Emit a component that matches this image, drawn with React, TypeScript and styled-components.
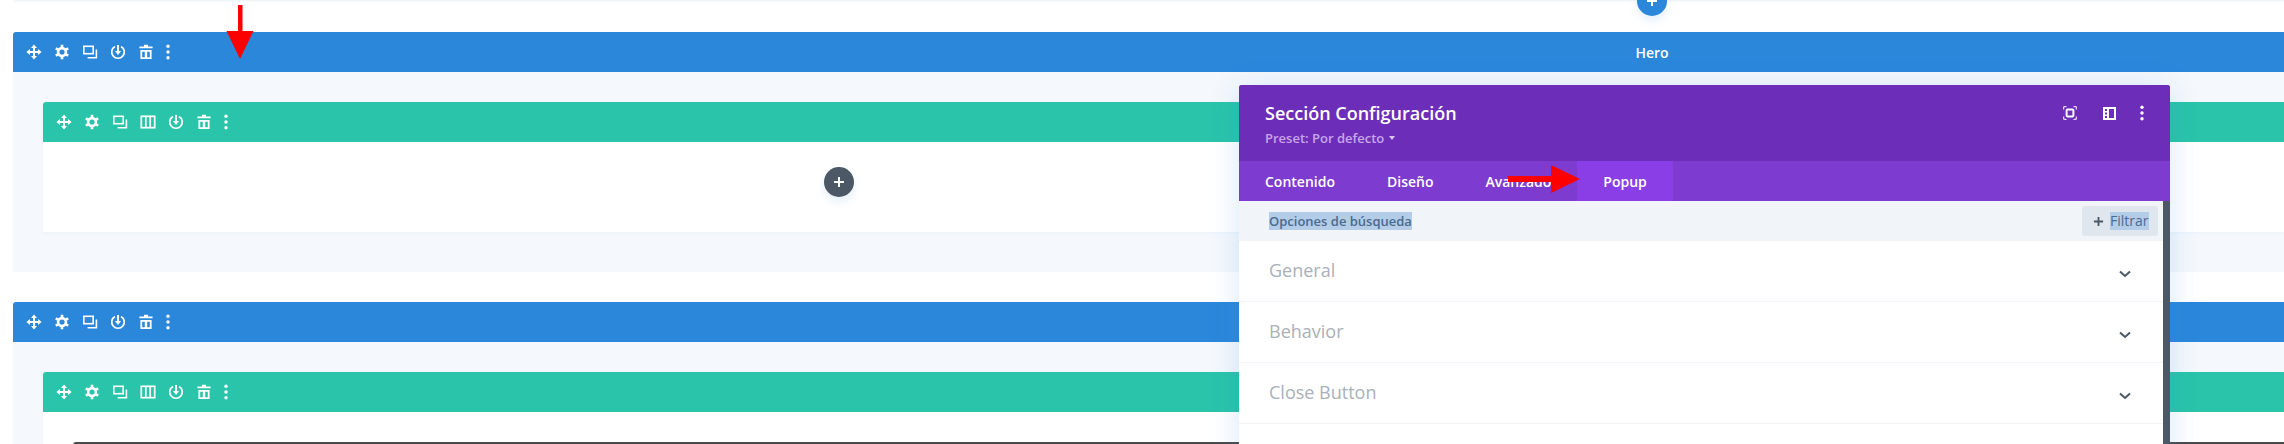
import React from "react";
import styled, { createGlobalStyle } from "styled-components";

const GlobalStyle = createGlobalStyle`
  html, body {
    margin: 0;
    padding: 0;
    background: #fff;
    font-family: "Open Sans", "Noto Sans", sans-serif;
  }
`;

const tabs = ["Contenido", "Diseño", "Avanzado", "Popup"];
const groups = ["General", "Behavior", "Close Button"];

const MoveIcon = () => (
  <svg width="16" height="16" viewBox="0 0 16 16" fill="#fff">
    <path d="M7 4h2v3h3V5l3.6 3L12 11V9H9v3h2l-3 3.6L5 12h2V9H4v2L.4 8 4 5v2h3V4H5l3-3.6L11 4z" />
  </svg>
);

const GearIcon = () => (
  <svg width="16" height="16" viewBox="0 0 16 16" fill="none" stroke="#fff">
    <circle cx="8" cy="8" r="3.9" strokeWidth="2.6" />
    <g strokeWidth="2.6">
      <path d="M8 .8v2.6M8 12.6v2.6" />
      <path d="M1.8 4.4l2.2 1.3M12 10.3l2.2 1.3" />
      <path d="M1.800 11.6L4 10.3M12 5.7l2.2-1.3" />
    </g>
  </svg>
);

const CloneIcon = () => (
  <svg width="16" height="16" viewBox="0 0 16 16" fill="none" stroke="#fff" strokeWidth="1.6">
    <rect x="1.8" y="2.3" width="9.4" height="7.4" />
    <path d="M14.4 5.5v8.2H5.6" />
  </svg>
);

const ColumnsIcon = () => (
  <svg width="16" height="16" viewBox="0 0 16 16" fill="none" stroke="#fff" strokeWidth="1.7">
    <rect x="1.3" y="2.3" width="13.4" height="11.4" />
    <path d="M5.8 2.3v11.4M10.2 2.3v11.4" />
  </svg>
);

const PowerIcon = () => (
  <svg width="16" height="16" viewBox="0 0 16 16" fill="none" stroke="#fff" strokeWidth="1.7">
    <path d="M5 2.4a6.3 6.3 0 1 0 6 0" />
    <path d="M8 1v6.5" strokeWidth="2" />
    <path d="M4.9 7h6.2L8 10.9z" fill="#fff" stroke="none" />
  </svg>
);

const TrashIcon = () => (
  <svg width="16" height="16" viewBox="0 0 16 16" fill="#fff">
    <path d="M6 .8h4v1.6h4.6v1.8H1.4V2.4H6z" />
    <path d="M2.4 6h11.2v9H2.4zM4.2 7.8v5.4h2.6V7.8zm5 0v5.4h2.6V7.8z" fillRule="evenodd" />
  </svg>
);

const DotsIcon = () => (
  <svg width="6" height="16" viewBox="0 0 6 16" fill="#fff">
    <circle cx="3" cy="2.2" r="1.7" />
    <circle cx="3" cy="8" r="1.7" />
    <circle cx="3" cy="13.8" r="1.7" />
  </svg>
);

const FocusIcon = () => (
  <svg width="14" height="14" viewBox="0 0 14 14" fill="none" stroke="#fff" strokeWidth="1">
    <path d="M3.500.7H.7v2.8M10.500.7h2.800v2.800M3.500 13.300H.7v-2.800M10.500 13.300h2.800v-2.800" />
    <rect x="3.600" y="3.600" width="6.800" height="6.800" rx="0.800" strokeWidth="2" />
  </svg>
);

const SidebarIcon = () => (
  <svg width="13" height="13" viewBox="0 0 13 13" fill="#fff">
    <path
      d="M0 0h13v13H0zM2 2v2h2V2zm0 3.500v2h2v-2zM2 9v2h2V9zm4-7v9h5V2z"
      fillRule="evenodd"
    />
  </svg>
);

const ChevronIcon = () => (
  <svg width="12" height="8" viewBox="0 0 12 8" fill="none" stroke="#4c5866" strokeWidth="2">
    <path d="M1 1.500l5 4.500 5-4.500" />
  </svg>
);

const PlusGlyph = ({ size, color }: { size: number; color: string }) => (
  <svg width={size} height={size} viewBox="0 0 12 12" fill="none" stroke={color} strokeWidth="2">
    <path d="M6 1v10M1 6h10" />
  </svg>
);

const Toolbar = ({ columns }: { columns?: boolean }) => (
  <Tools>
    <Tool><MoveIcon /></Tool>
    <Tool><GearIcon /></Tool>
    <Tool><CloneIcon /></Tool>
    {columns && <Tool><ColumnsIcon /></Tool>}
    <Tool><PowerIcon /></Tool>
    <Tool><TrashIcon /></Tool>
    <MoreTool><DotsIcon /></MoreTool>
  </Tools>
);

export default function App() {
  return (
    <Page>
      <GlobalStyle />
      <TopStrip>
        <AddButton $bg="#2b87da">
          <PlusGlyph size={12} color="#fff" />
        </AddButton>
      </TopStrip>

      <Section>
        <SectionBar>
          <Toolbar />
          <BarTitle>Hero</BarTitle>
        </SectionBar>
        <SectionBody>
          <Row>
            <RowBar>
              <Toolbar columns />
            </RowBar>
            <RowBody>
              <InnerAdd>
                <AddButton $bg="#4c5866">
                  <PlusGlyph size={12} color="#fff" />
                </AddButton>
              </InnerAdd>
            </RowBody>
          </Row>
        </SectionBody>
      </Section>

      <Section>
        <SectionBar>
          <Toolbar />
        </SectionBar>
        <SectionBody>
          <Row>
            <RowBar>
              <Toolbar columns />
            </RowBar>
            <RowBody>
              <ModuleEdge />
            </RowBody>
          </Row>
        </SectionBody>
      </Section>

      <Modal>
        <ModalHeader>
          <div>
            <ModalTitle>Sección Configuración</ModalTitle>
            <Preset>
              Preset: Por defecto <Caret />
            </Preset>
          </div>
          <HeaderIcons>
            <FocusIcon />
            <SidebarIcon />
            <HeaderDots><DotsIcon /></HeaderDots>
          </HeaderIcons>
        </ModalHeader>
        <TabBar>
          {tabs.map((tab) => (
            <Tab key={tab} $active={tab === "Popup"}>
              {tab}
            </Tab>
          ))}
        </TabBar>
        <ModalBody>
          <SearchBar>
            <Selected>Opciones de búsqueda</Selected>
            <FilterButton>
              <PlusGlyph size={11} color="#4c5866" />
              <Selected>Filtrar</Selected>
            </FilterButton>
          </SearchBar>
          {groups.map((group) => (
            <Group key={group}>
              {group}
              <Chevron><ChevronIcon /></Chevron>
            </Group>
          ))}
        </ModalBody>
      </Modal>

      <DownArrow width="30" height="54" viewBox="0 0 30 54" fill="#f00">
        <path d="M13 0h4.500v26H28.500L15 54 1.500 26H13z" />
      </DownArrow>
      <RightArrow width="72" height="28" viewBox="0 0 72 28" fill="#f00">
        <path d="M0 11h43V0l29 14-29 14V17H0z" />
      </RightArrow>
    </Page>
  );
}

const Page = styled.div`
  position: relative;
  height: 444px;
  overflow: hidden;
  background: #fff;
`;

const TopStrip = styled.div`
  position: relative;
  height: 1px;
  margin-left: 14px;
  margin-bottom: 31px;
  background: #f3f4f6;
  box-shadow: 0 1px 2px rgba(43, 135, 218, 0.08);

  > div {
    position: absolute;
    left: 1623px;
    top: -14px;
  }
`;

const AddButton = styled.div<{ $bg: string }>`
  width: 30px;
  height: 30px;
  border-radius: 50%;
  display: flex;
  align-items: center;
  justify-content: center;
  background: ${(p) => p.$bg};
  box-shadow: 0 5px 10px rgba(43, 135, 218, 0.12);
`;

const Section = styled.section`
  margin-left: 13px;
  margin-bottom: 30px;
`;

const SectionBar = styled.div`
  position: relative;
  height: 40px;
  display: flex;
  align-items: center;
  padding-left: 13px;
  background: #2b87da;
  border-radius: 3px 0 0 0;
`;

const BarTitle = styled.div`
  position: absolute;
  left: 1609px;
  width: 60px;
  text-align: center;
  color: #fff;
  font-size: 14px;
  font-weight: 600;
`;

const SectionBody = styled.div`
  padding: 30px 0 40px 30px;
  background: #f5f8fc;
`;

const Row = styled.div`
  background: #fff;
  box-shadow: 0 1px 3px rgba(43, 135, 218, 0.06);
`;

const RowBar = styled.div`
  height: 40px;
  display: flex;
  align-items: center;
  padding-left: 13px;
  background: #29c4a9;
  border-radius: 3px 0 0 0;
`;

const RowBody = styled.div`
  height: 90px;
  padding: 30px 0 0 30px;
  box-sizing: border-box;
`;

const InnerAdd = styled.div`
  display: flex;
  margin: -5px 0 0 751px;
`;

const ModuleEdge = styled.div`
  height: 40px;
  background: #4a4a4a;
  border-radius: 3px 0 0 0;
`;

const Tools = styled.div`
  display: flex;
  align-items: center;
  gap: 12px;
`;

const Tool = styled.span`
  width: 16px;
  height: 16px;
  display: flex;
`;

const MoreTool = styled.span`
  width: 6px;
  height: 16px;
  display: flex;
  margin-left: -1px;
`;

const Modal = styled.div`
  position: absolute;
  left: 1239px;
  top: 85px;
  width: 931px;
  height: 420px;
  border-radius: 3px 3px 0 0;
  overflow: hidden;
  background: #4c5866;
  box-shadow: 0 5px 30px rgba(43, 135, 218, 0.2);
`;

const ModalHeader = styled.div`
  height: 76px;
  box-sizing: border-box;
  padding: 15px 25px 0 26px;
  display: flex;
  justify-content: space-between;
  background: #6c2eb9;
  color: #fff;
`;

const ModalTitle = styled.div`
  font-size: 18px;
  line-height: 26px;
  font-weight: 600;
`;

const Preset = styled.div`
  margin-top: 4px;
  font-size: 13px;
  line-height: 16px;
  font-weight: 600;
  color: #c8a6ec;
  display: flex;
  align-items: center;
  gap: 5px;
`;

const Caret = styled.span`
  width: 0;
  height: 0;
  border-left: 3px solid transparent;
  border-right: 3px solid transparent;
  border-top: 4px solid #d9c3f2;
`;

const HeaderIcons = styled.div`
  height: 26px;
  display: flex;
  align-items: center;
  gap: 26px;
`;

const HeaderDots = styled.span`
  display: flex;
  margin-left: -3px;
`;

const TabBar = styled.div`
  height: 40px;
  display: flex;
  background: #7e3bd0;
`;

const Tab = styled.div<{ $active?: boolean }>`
  padding: 0 26px;
  display: flex;
  align-items: center;
  color: #fff;
  font-size: 14px;
  font-weight: 600;
  background: ${(p) => (p.$active ? "#8a3fe6" : "transparent")};
`;

const ModalBody = styled.div`
  width: 924px;
  height: 304px;
  background: #fff;
`;

const SearchBar = styled.div`
  height: 40px;
  box-sizing: border-box;
  padding: 0 5px 0 30px;
  display: flex;
  align-items: center;
  justify-content: space-between;
  background: #f1f5f9;
  font-size: 13px;
  font-weight: 600;
  color: #4c6a8c;
`;

const Selected = styled.span`
  background: #b3cde8;
  line-height: 18px;
`;

const FilterButton = styled.div`
  width: 76px;
  height: 30px;
  box-sizing: border-box;
  padding-left: 11px;
  display: flex;
  align-items: center;
  gap: 6px;
  background: #e0e6ed;
  border-radius: 3px;
  font-size: 14px;
  font-weight: 400;
`;

const Group = styled.div`
  height: 61px;
  box-sizing: border-box;
  padding: 0 32px 3px 30px;
  display: flex;
  align-items: center;
  justify-content: space-between;
  border-bottom: 1px solid #f1f5f9;
  color: #a9b1b9;
  font-size: 18px;
`;

const Chevron = styled.span`
  display: flex;
  margin-top: 8px;
`;

const DownArrow = styled.svg`
  position: absolute;
  left: 225px;
  top: 5px;
`;

const RightArrow = styled.svg`
  position: absolute;
  left: 1508px;
  top: 165px;
`;
